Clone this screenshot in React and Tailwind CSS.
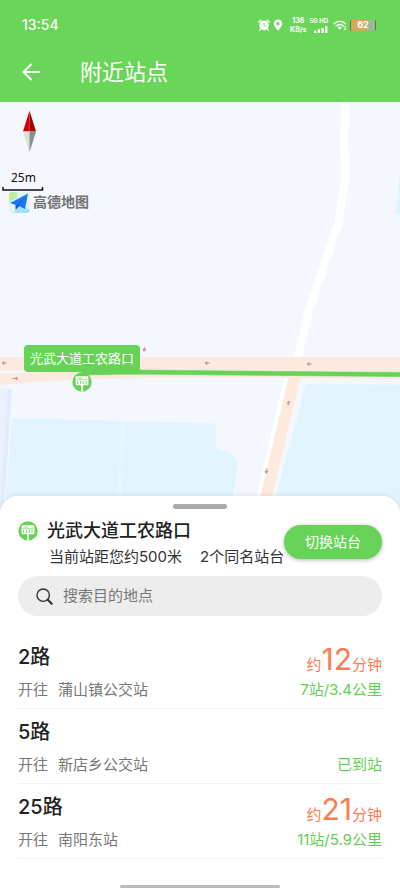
import React from 'react';

// Routes that stop at the current platform
const routes = [
  { name: '2路', to: '蒲山镇公交站', minutes: '12', distance: '7站/3.4公里' },
  { name: '5路', to: '新店乡公交站', minutes: null, distance: '已到站' },
  { name: '25路', to: '南阳东站', minutes: '21', distance: '11站/5.9公里' },
];

const StopIcon = () => (
  <svg className="block h-5 w-5 shrink-0" viewBox="0 0 20 20" aria-hidden="true">
    <circle cx="10" cy="10" r="9.7" fill="#66d358" />
    <path
      fill="#fff"
      d="M4.6 4.2h10.8a1 1 0 0 1 1 1v7a1 1 0 0 1-1 1h-4.5v6.4H9.1v-6.4H4.6a1 1 0 0 1-1-1v-7a1 1 0 0 1 1-1z"
    />
    <path stroke="#66d358" strokeWidth="0.7" d="M4.2 7.8h11.6M5.4 6h5M13.5 6h1.2" />
    <path stroke="#66d358" strokeWidth="1" d="M5.7 9.2v2.6M8.4 9.2v2.6M11.2 9.2v2.6M14 9.2v2.6" />
  </svg>
);

const StatusBar = () => (
  <div className="flex h-[50px] items-center justify-between pr-6 pl-[22px]">
    <span className="text-sm font-medium">13:54</span>
    <div className="flex items-center gap-[3px]">
      {/* Alarm */}
      <svg className="h-3 w-3" viewBox="0 0 12 12" aria-hidden="true">
        <circle cx="6" cy="6.4" r="4.8" fill="#fff" />
        <path d="M.7 3 2.8 1.2M11.3 3 9.2 1.2M2.6 10.4l-.9 1M9.4 10.4l.9 1" stroke="#fff" strokeWidth="1.2" strokeLinecap="round" />
        <path d="M6 3.8v2.8l1.8.7" fill="none" stroke="#69d65a" strokeWidth="0.8" />
      </svg>
      {/* Location */}
      <svg className="h-3 w-2.5" viewBox="0 0 10 12" aria-hidden="true">
        <path fill="#fff" fillRule="evenodd" d="M5 .4a4.2 4.2 0 0 1 4.2 4.3C9.2 7.4 5 11.6 5 11.6S.8 7.4.8 4.7A4.2 4.2 0 0 1 5 .4zm0 2.7a1.6 1.6 0 1 0 0 3.2 1.6 1.6 0 0 0 0-3.2z" />
      </svg>
      <div className="ml-1 flex flex-col items-center text-[7px] leading-[9px] font-bold">
        <span>136</span>
        <span>KB/s</span>
      </div>
      <div className="flex flex-col items-end gap-px">
        <span className="text-[6px] leading-[8px] font-bold whitespace-nowrap">5G HD</span>
        <svg className="h-[7px] w-[14px]" viewBox="0 0 14 7" aria-hidden="true">
          <path fill="#fff" d="M0 4.5h2.3V7H0zM3.7 3.3H6V7H3.7zM7.4 2h2.3v5H7.4zM11.1 0h2.3v7h-2.3z" />
        </svg>
      </div>
      {/* Wifi */}
      <svg className="ml-0.5 h-3 w-[14px]" viewBox="0 0 14 12" aria-hidden="true">
        <path d="M1 4.7a8.2 8.2 0 0 1 11.4 0M3 7a5.3 5.3 0 0 1 7.4 0" fill="none" stroke="#fff" strokeWidth="1.3" strokeLinecap="round" />
        <path d="M4.6 8.6a3 3 0 0 1 4.2 0L6.7 10.8z" fill="#fff" />
        <path d="M12 7v4M10.7 9.7 12 11l1.3-1.3" fill="none" stroke="#fff" strokeWidth="0.9" />
      </svg>
      {/* Battery */}
      <div className="flex h-[11px] w-[26px] items-center justify-center rounded-xs border-x border-[#5d7350] bg-linear-to-r from-[#d3aa58] from-60% to-[#9db797] to-70% text-[9px] font-bold">
        62
      </div>
    </div>
  </div>
);

const Header = () => (
  <header className="bg-[#69d65a] pb-2 text-white">
    <StatusBar />
    <div className="flex h-11 items-center pl-[22px]">
      <button type="button" aria-label="返回" className="mr-10">
        <svg className="block h-[18px] w-[18px]" viewBox="0 0 18 18" fill="none" stroke="#fff" strokeWidth="2" strokeLinecap="round" strokeLinejoin="round" aria-hidden="true">
          <path d="M17 9H1.5M9 1.5 1.5 9 9 16.5" />
        </svg>
      </button>
      <h1 className="text-[22px] leading-8">附近站点</h1>
    </div>
  </header>
);

const MapDrawing = () => (
  <svg className="block h-full w-full" viewBox="0 102 400 412" preserveAspectRatio="xMidYMin slice" aria-hidden="true">
    <rect y="102" width="400" height="412" fill="#f4f8fe" />
    {/* Water and blocks */}
    <path fill="#e1f3fe" d="M12 418 216 423.500v25l13 4 8 8V473l-8 41H5z" />
    <path fill="#e8f5fe" d="M121 421h5l-5 93h-5z" />
    <path fill="#e1f3fe" d="M306 384l94 .8V514H271zM400 168v47l-4-1z" />
    <path fill="#e3ebfd" d="M0 389h12L4 514H0z" />
    <path fill="#eaf0fe" d="M0 389h8L1 495H0z" />
    {/* Side roads */}
    <path d="M346 102l-2 31 1 45-6 43-30 90-12 50" fill="none" stroke="#fff" strokeWidth="8" strokeLinejoin="round" />
    <path fill="#fff" d="M284 378h5l-27 136h-9z" />
    <path fill="#fee9df" d="M289 376h12l-33 138h-12z" />
    {/* Main road */}
    <path fill="#fee9df" d="M0 357h400v22L170 377.500 75 380 0 385v-12l60-3L0 371.500z" />
    <path fill="#f4f8fe" d="M0 370.500h100v.5L0 373.500z" />
    <path d="M82 373l50-1 268 2.500" fill="none" stroke="#9be08f" strokeWidth="5" />
    <path d="M82 373l50-1 268 2.500" fill="none" stroke="#66d358" strokeWidth="4" />
    {/* Direction arrows */}
    <g stroke="#c79c94" strokeWidth="1" fill="#c79c94">
      <path d="M2 363h5M4 361.500 2 363l2 1.500z" />
      <path d="M12 378.500h5M16 377l2 1.500-2 1.500z" />
      <path d="M205 363h5M207 361.500l-2 1.500 2 1.500z" />
      <path d="M307 364h5M309 362.500l-2 1.500 2 1.500z" />
      <path d="M288 406l1-5M287 403l2-2 1 2z" />
      <path d="M267 468l-1 5M265 471l1 2.500 2-2z" />
      <path d="M145 347l-1 4M143 349l1 2.500 2-2z" />
    </g>
    {/* Compass */}
    <path fill="#d40000" d="M29.500 110.500 23 131.500h6.500z" />
    <path fill="#a30505" d="M29.500 110.500 36 131.500h-6.500z" />
    <path fill="#dedede" d="M29.500 152.500 23 131.500h6.500z" />
    <path fill="#8d8d8d" d="M29.500 152.500 36 131.500h-6.500z" />
    {/* Scale bar */}
    <path d="M3 187v3h39.500v-3" fill="none" stroke="#111" strokeWidth="1.500" />
    {/* Provider mark */}
    <rect x="9" y="192" width="21" height="21" rx="3" fill="#e3f3f3" />
    <path fill="#b9efa3" d="M12 192h5v6l-8 4v-7a3 3 0 0 1 3-3z" />
    <path fill="#9fe2fb" d="M13 213l8-8 9 5a3 3 0 0 1-3 3z" />
    <path fill="#1677f2" d="M28 193.500 10 203l5.500 2z" />
    <path fill="#0b5fd6" d="M28 193.500 15.500 205v5l3.500-3.500z" />
    <path fill="#1677f2" d="M28 193.500 18 205.500l7 3.500z" />
  </svg>
);

const StationMap = () => (
  <section className="relative h-[412px] overflow-hidden">
    <MapDrawing />
    <span className="absolute top-[68px] left-[11px] font-['Noto_Sans'] text-xs leading-4 text-[#111]">25m</span>
    <span className="absolute top-[90px] left-[33px] text-sm leading-5 font-bold text-[#727272]">高德地图</span>
    <div className="absolute top-[243px] left-6 flex w-[116px] flex-col items-center">
      <div className="w-full rounded-sm bg-[#66d358] text-center text-[13px] leading-[27px] whitespace-nowrap text-white">
        光武大道工农路口
      </div>
      <StopIcon />
    </div>
  </section>
);

const RouteRow = ({ route }) => (
  <li className="flex justify-between border-b border-[#f1f1f1] pt-2 pb-1.5">
    <div>
      <h3 className="text-xl leading-[30px] font-medium text-[#222]">{route.name}</h3>
      <p className="mt-1.5 flex gap-2.5 text-[15px] leading-6 text-[#777]">
        <span>开往</span>
        <span>{route.to}</span>
      </p>
    </div>
    <div className="flex flex-col items-end justify-end gap-1">
      {route.minutes && (
        <p className="flex h-[30px] items-baseline text-[15px] leading-[30px] text-[#ff7a50]">
          <span>约</span>
          <span className="text-[30px]">{route.minutes}</span>
          <span>分钟</span>
        </p>
      )}
      <p className="text-[15px] leading-6 text-[#5fd050]">{route.distance}</p>
    </div>
  </li>
);

const StationSheet = () => (
  <section className="relative -mt-[18px] rounded-t-[18px] bg-white px-[18px] pt-2 pb-px shadow-[0_-1px_4px_rgba(0,0,0,0.08)]">
    <div className="mx-auto h-[5px] w-[54px] rounded-full bg-[#aaa]" />
    <div className="mt-2 flex items-start justify-between">
      <div className="whitespace-nowrap">
        <div className="flex items-center gap-[9px]">
          <StopIcon />
          <h2 className="text-lg leading-7 font-medium text-[#222]">光武大道工农路口</h2>
        </div>
        <p className="flex gap-[18px] pl-[31px] text-[15px] leading-6 text-[#333]">
          <span>当前站距您约500米</span>
          <span>2个同名站台</span>
        </p>
      </div>
      <button
        type="button"
        className="mt-2 -ml-5 h-[34px] w-[98px] shrink-0 rounded-full bg-[#66d358] text-sm text-white shadow-[0_1px_4px_rgba(0,0,0,0.3)]"
      >
        切换站台
      </button>
    </div>
    <label className="mt-[7px] flex h-10 items-center gap-2.5 rounded-full bg-[#ededed] pl-[18px]">
      <svg className="h-[17px] w-[17px] shrink-0" viewBox="0 0 17 17" fill="none" stroke="#333" aria-hidden="true">
        <circle cx="7.2" cy="7.2" r="6.2" strokeWidth="1.4" />
        <path d="M11.8 11.8 15.700 15.700" strokeWidth="2.2" strokeLinecap="round" />
      </svg>
      <input
        type="text"
        aria-label="搜索目的地点"
        placeholder="搜索目的地点"
        className="min-w-0 flex-1 bg-transparent text-[15px] leading-6 outline-none placeholder:text-[#777]"
      />
    </label>
    <ul className="mt-[18px]">
      {routes.map((route) => (
        <RouteRow key={route.name} route={route} />
      ))}
    </ul>
    {/* Home indicator */}
    <div className="mx-auto mt-[26px] h-[3px] w-40 rounded-full bg-[#bbb]" />
  </section>
);

const App = () => (
  <main className="min-h-screen bg-white font-['Inter','Noto_Sans_CJK_SC',sans-serif]" lang="zh-CN">
    <Header />
    <StationMap />
    <StationSheet />
  </main>
);

export default App;
